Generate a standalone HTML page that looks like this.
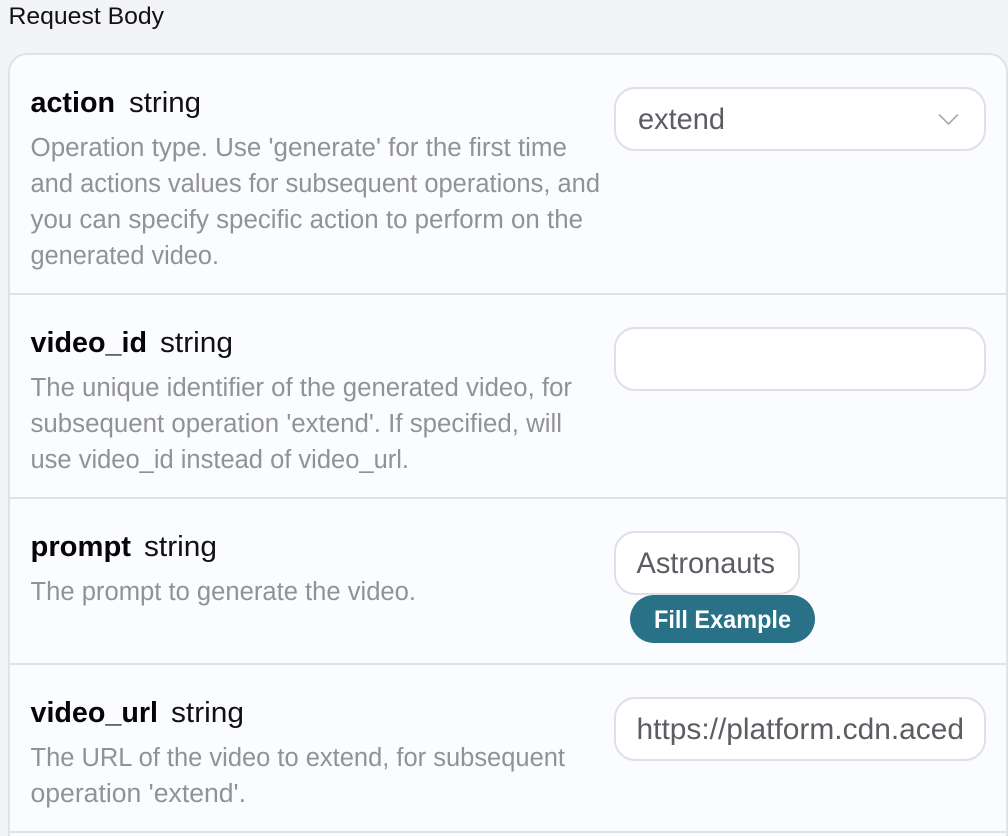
<!DOCTYPE html>
<html>
<head>
<meta charset="utf-8">
<style>
html,body{margin:0;padding:0;width:1008px;height:836px;overflow:hidden;background:#f3f4f6}
svg{display:block;font-family:"Liberation Sans",sans-serif}
.h{font-size:28.5px;font-weight:700;fill:#050505}
.t{font-size:28.5px;fill:#111114}
.d{font-size:25.5px;fill:#919298}
.v{font-size:29.5px;fill:#5c5d63}
</style>
</head>
<body>
<svg width="1008" height="836" viewBox="0 0 1008 836" xmlns="http://www.w3.org/2000/svg">
<rect width="1008" height="836" fill="#f3f4f6"/>
<text x="8.5" y="24" font-size="24" fill="#111114" textLength="155.5" lengthAdjust="spacingAndGlyphs">Request Body</text>

<rect x="9" y="54" width="998" height="800" rx="18" fill="#fbfcff" stroke="#e1e2e8" stroke-width="2"/>
<rect x="10" y="293" width="996" height="2" fill="#e1e2e8"/>
<rect x="10" y="497" width="996" height="2" fill="#e1e2e8"/>
<rect x="10" y="663" width="996" height="2" fill="#e1e2e8"/>
<rect x="10" y="831" width="996" height="2" fill="#e1e2e8"/>

<text class="h" x="30.5" y="112" textLength="84.5" lengthAdjust="spacingAndGlyphs">action</text>
<text class="t" x="129" y="112" textLength="72" lengthAdjust="spacingAndGlyphs">string</text>
<text class="d" x="30.5" y="156" textLength="536.5" lengthAdjust="spacingAndGlyphs">Operation type. Use 'generate' for the first time</text>
<text class="d" x="30.5" y="192" textLength="569.5" lengthAdjust="spacingAndGlyphs">and actions values for subsequent operations, and</text>
<text class="d" x="30.5" y="228" textLength="552.5" lengthAdjust="spacingAndGlyphs">you can specify specific action to perform on the</text>
<text class="d" x="30.5" y="264" textLength="188.5" lengthAdjust="spacingAndGlyphs">generated video.</text>

<text class="h" x="30.5" y="352" textLength="116.5" lengthAdjust="spacingAndGlyphs">video_id</text>
<text class="t" x="160" y="352" textLength="73" lengthAdjust="spacingAndGlyphs">string</text>
<text class="d" x="30.5" y="396" textLength="541.5" lengthAdjust="spacingAndGlyphs">The unique identifier of the generated video, for</text>
<text class="d" x="30.5" y="432" textLength="531.5" lengthAdjust="spacingAndGlyphs">subsequent operation 'extend'. If specified, will</text>
<text class="d" x="30.5" y="468" textLength="378.5" lengthAdjust="spacingAndGlyphs">use video_id instead of video_url.</text>

<text class="h" x="30.5" y="556" textLength="100.5" lengthAdjust="spacingAndGlyphs">prompt</text>
<text class="t" x="144" y="556" textLength="73" lengthAdjust="spacingAndGlyphs">string</text>
<text class="d" x="30.5" y="600" textLength="385.5" lengthAdjust="spacingAndGlyphs">The prompt to generate the video.</text>

<text class="h" x="30.5" y="722" textLength="127.5" lengthAdjust="spacingAndGlyphs">video_url</text>
<text class="t" x="171" y="722" textLength="73" lengthAdjust="spacingAndGlyphs">string</text>
<text class="d" x="30.5" y="766" textLength="534.5" lengthAdjust="spacingAndGlyphs">The URL of the video to extend, for subsequent</text>
<text class="d" x="30.5" y="802" textLength="215.5" lengthAdjust="spacingAndGlyphs">operation 'extend'.</text>

<rect x="615" y="88" width="370" height="62" rx="20" fill="#fff" stroke="#dfe0e6" stroke-width="2"/>
<text class="v" x="638" y="129" textLength="87" lengthAdjust="spacingAndGlyphs">extend</text>
<path d="M939 114.5L948.5 124L958 114.5" fill="none" stroke="#a9aaaf" stroke-width="1.6"/>

<rect x="615" y="328" width="370" height="62" rx="20" fill="#fff" stroke="#dfe0e6" stroke-width="2"/>

<rect x="615" y="532" width="184" height="62" rx="20" fill="#fff" stroke="#dfe0e6" stroke-width="2"/>
<text class="v" x="636.5" y="573" textLength="138.5" lengthAdjust="spacingAndGlyphs">Astronauts</text>

<rect x="630" y="595" width="185" height="48" rx="24" fill="#287186"/>
<text x="654" y="628" font-size="25" font-weight="700" fill="#fff" textLength="137" lengthAdjust="spacingAndGlyphs">Fill Example</text>

<rect x="615" y="698" width="370" height="62" rx="20" fill="#fff" stroke="#dfe0e6" stroke-width="2"/>
<text class="v" x="636.5" y="739" textLength="327.5" lengthAdjust="spacingAndGlyphs">https://platform.cdn.aced</text>
<rect x="963" y="710" width="6" height="36" fill="#fff"/>
</svg>
</body>
</html>
